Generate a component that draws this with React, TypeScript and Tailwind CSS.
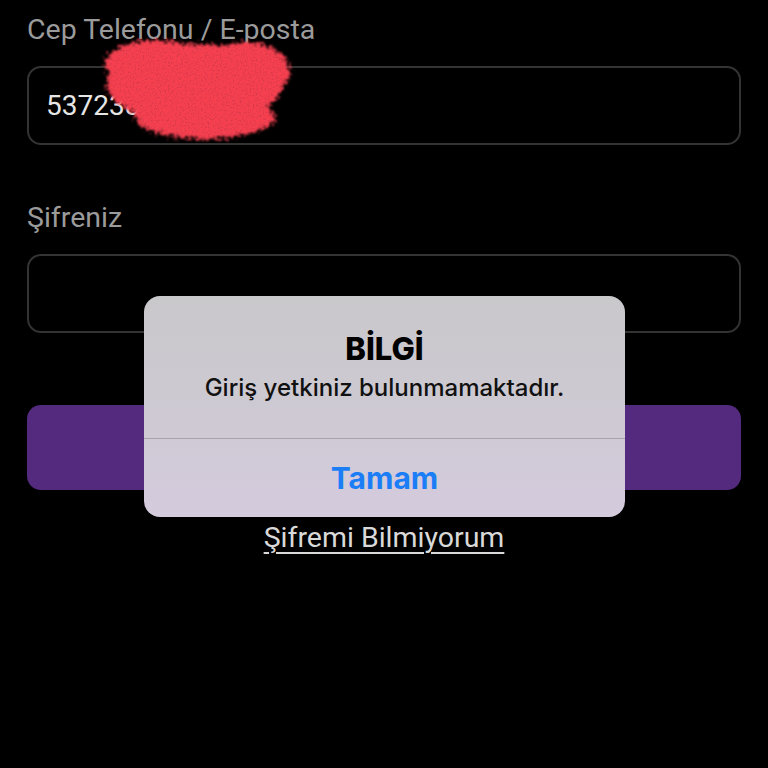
import React from "react";

export default function App() {
  return (
    <div className="relative h-[768px] w-[768px] overflow-hidden bg-black" style={{ fontFamily: "Roboto, 'Noto Sans', sans-serif" }}>
      <div className="flex flex-col px-[27px] pt-[14px]">
        <div className="text-[28.5px] leading-[32px] text-[#9b9b9b]">Cep Telefonu / E-posta</div>
        <div className="mt-[20px] flex h-[79px] items-center rounded-[14px] border-2 border-[#333333] pl-[17px]">
          <span className="text-[28px] text-[#e6e6e6]">537238</span>
        </div>
        <div className="mt-[57px] text-[28.5px] leading-[32px] text-[#9b9b9b]">Şifreniz</div>
        <div className="mt-[20px] h-[79px] rounded-[14px] border-2 border-[#333333]" />
        <div className="mt-[72px] h-[85px] rounded-[14px] bg-[#532a7d]" />
        <div className="mt-[32px] text-center text-[28.5px] leading-[32px] text-[#d9d9d9] underline underline-offset-[5px] decoration-[2px]">
          Şifremi Bilmiyorum
        </div>
      </div>

      {/* red scribble */}
      <svg className="absolute left-[95px] top-[22px]" width="210" height="128" viewBox="0 0 210 128">
        <defs>
          <filter id="rough" x="-20%" y="-20%" width="140%" height="140%">
            <feTurbulence type="fractalNoise" baseFrequency="0.35" numOctaves="2" seed="3" result="n" />
            <feDisplacementMap in="SourceGraphic" in2="n" scale="14" xChannelSelector="R" yChannelSelector="G" result="d" />
            <feGaussianBlur in="d" stdDeviation="1.2" />
          </filter>
          <filter id="speck" x="0" y="0" width="100%" height="100%">
            <feTurbulence type="fractalNoise" baseFrequency="0.6" numOctaves="2" seed="7" result="t" />
            <feColorMatrix in="t" type="matrix" values="0 0 0 0 0.15  0 0 0 0 0.02  0 0 0 0 0.05  0 0 0 -2.5 1.3" />
          </filter>
          <mask id="blobmask">
            <g filter="url(#rough)" fill="white">
              <ellipse cx="100" cy="62" rx="88" ry="40" />
              <ellipse cx="60" cy="42" rx="50" ry="24" />
              <ellipse cx="110" cy="95" rx="70" ry="22" />
              <ellipse cx="150" cy="50" rx="45" ry="30" />
            </g>
          </mask>
        </defs>
        <g mask="url(#blobmask)">
          <rect width="210" height="128" fill="#f7404f" />
          <rect width="210" height="128" filter="url(#speck)" opacity="0.3" />
        </g>
      </svg>

      {/* alert */}
      <div
        className="absolute left-[144px] top-[296px] flex h-[221px] w-[481px] flex-col overflow-hidden rounded-[16px] bg-[linear-gradient(180deg,#c9c8cb_0%,#cdc9d1_45%,#d4cbdd_100%)]"
        style={{ fontFamily: "Inter, 'Open Sans', sans-serif" }}
      >
        <div className="flex h-[142px] flex-col items-center pt-[34px]">
          <div className="text-[31px] font-extrabold leading-[38px] text-black">BİLGİ</div>
          <div className="mt-[5px] text-[24px] font-medium leading-[30px] text-[#111111]">Giriş yetkiniz bulunmamaktadır.</div>
        </div>
        <div className="h-px bg-[#a9a3b0]" />
        <div className="flex flex-1 items-center justify-center">
          <span className="text-[30px] font-bold text-[#1b7ef6]">Tamam</span>
        </div>
      </div>
    </div>
  );
}
